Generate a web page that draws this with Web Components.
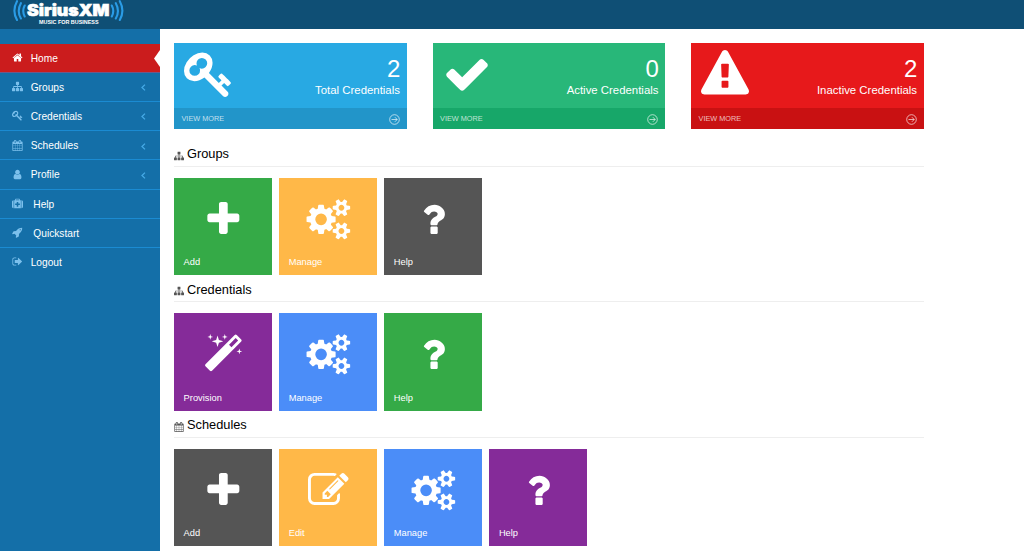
<!DOCTYPE html>
<html lang="en">
<head>
<meta charset="utf-8">
<title>SiriusXM Music for Business</title>
<style>
  html, body {
    margin: 0;
    height: 100%;
    overflow: hidden;
    background: #fff;
    font-family: "Liberation Sans", Arial, sans-serif;
  }
</style>
</head>
<body>
<sxm-dashboard>
  <sxm-header slot="header"></sxm-header>
  <sxm-nav slot="nav">
    <nav-item icon="home" active>Home</nav-item>
    <nav-item icon="sitemap" expandable>Groups</nav-item>
    <nav-item icon="key" expandable>Credentials</nav-item>
    <nav-item icon="calendar" expandable>Schedules</nav-item>
    <nav-item icon="user" expandable>Profile</nav-item>
    <nav-item icon="medkit" indent>Help</nav-item>
    <nav-item icon="rocket" indent>Quickstart</nav-item>
    <nav-item icon="signout">Logout</nav-item>
  </sxm-nav>
  <stat-row>
    <stat-card icon="key" size="50" count="2" color="#28a9e3" footer="#2295c9">Total Credentials</stat-card>
    <stat-card icon="check" size="48" count="0" color="#28b779" footer="#17a769">Active Credentials</stat-card>
    <stat-card icon="warning" size="48" count="2" color="#e7191b" footer="#c91112">Inactive Credentials</stat-card>
  </stat-row>
  <tile-section icon="sitemap" heading="Groups">
    <action-tile icon="plus" color="#35aa47">Add</action-tile>
    <action-tile icon="cogs" color="#ffb848">Manage</action-tile>
    <action-tile icon="question" color="#555555">Help</action-tile>
  </tile-section>
  <tile-section icon="sitemap" heading="Credentials">
    <action-tile icon="magic" color="#852b99">Provision</action-tile>
    <action-tile icon="cogs" color="#4b8df8">Manage</action-tile>
    <action-tile icon="question" color="#35aa47">Help</action-tile>
  </tile-section>
  <tile-section icon="calendar" heading="Schedules">
    <action-tile icon="plus" color="#555555">Add</action-tile>
    <action-tile icon="edit" color="#ffb848">Edit</action-tile>
    <action-tile icon="cogs" color="#4b8df8">Manage</action-tile>
    <action-tile icon="question" color="#852b99">Help</action-tile>
  </tile-section>
</sxm-dashboard>

<script>
(function initDashboard() {
  // every glyph sits on a 1792 unit em square
  const icons = {
    home: "M1472 992v480q0 26-19 45t-45 19h-384v-384h-256v384h-384q-26 0-45-19t-19-45v-480q0-1 .5-3t.5-3l575-474 575 474q1 2 1 6zm223-69l-62 74q-8 9-21 11h-3q-13 0-21-7l-692-577-692 577q-12 8-24 7-13-2-21-11l-62-74q-8-10-7-23.5t11-21.5l719-599q32-26 76-26t76 26l244 204v-195q0-14 9-23t23-9h192q14 0 23 9t9 23v408l219 182q10 8 11 21.5t-7 23.5z",
    sitemap: "M1792 1248v320q0 40-28 68t-68 28h-320q-40 0-68-28t-28-68v-320q0-40 28-68t68-28h96v-192h-512v192h96q40 0 68 28t28 68v320q0 40-28 68t-68 28h-320q-40 0-68-28t-28-68v-320q0-40 28-68t68-28h96v-192h-512v192h96q40 0 68 28t28 68v320q0 40-28 68t-68 28h-320q-40 0-68-28t-28-68v-320q0-40 28-68t68-28h96v-192q0-52 38-90t90-38h512v-192h-96q-40 0-68-28t-28-68v-320q0-40 28-68t68-28h320q40 0 68 28t28 68v320q0 40-28 68t-68 28h-96v192h512q52 0 90 38t38 90v192h96q40 0 68 28t28 68z",
    key: "M832 512q0-80-56-136t-136-56-136 56-56 136q0 42 19 83-41-19-83-19-80 0-136 56t-56 136 56 136 136 56 136-56 56-136q0-42-19-83 41 19 83 19 80 0 136-56t56-136zm851 704q0 17-49 66t-66 49q-9 0-28.5-16t-36.5-33-38.5-40-24.5-26l-96 96 220 220q28 28 28 68 0 42-39 81t-81 39q-40 0-68-28l-671-671q-176 131-365 131-163 0-265.5-102.5t-102.5-265.5q0-160 95-313t248-248 313-95q163 0 265.5 102.5t102.5 265.5q0 189-131 365l355 355 96-96q-3-3-26-24.5t-40-38.5-33-36.5-16-28.5q0-17 49-66t66-49q13 0 23 10 6 6 46 44.5t82 79.5 86.5 86 73 78 28.5 41z",
    calendar: "M192 1664h288v-288h-288v288zm352 0h320v-288h-320v288zm-352-352h288v-320h-288v320zm352 0h320v-320h-320v320zm-352-384h288v-288h-288v288zm736 736h320v-288h-320v288zm-384-736h320v-288h-320v288zm768 736h288v-288h-288v288zm-384-352h320v-320h-320v320zm-352-864v-288q0-13-9.5-22.5t-22.5-9.5h-64q-13 0-22.5 9.5t-9.5 22.5v288q0 13 9.5 22.5t22.5 9.5h64q13 0 22.5-9.5t9.5-22.5zm736 864h288v-320h-288v320zm-384-384h320v-288h-320v288zm384 0h288v-288h-288v288zm32-480v-288q0-13-9.5-22.5t-22.5-9.5h-64q-13 0-22.5 9.5t-9.5 22.5v288q0 13 9.5 22.5t22.5 9.5h64q13 0 22.5-9.5t9.5-22.5zm384-64v1280q0 52-38 90t-90 38h-1408q-52 0-90-38t-38-90v-1280q0-52 38-90t90-38h128v-96q0-66 47-113t113-47h64q66 0 113 47t47 113v96h384v-96q0-66 47-113t113-47h64q66 0 113 47t47 113v96h128q52 0 90 38t38 90z",
    user: "M1536 1399q0 109-62.5 187t-150.5 78h-854q-88 0-150.5-78t-62.5-187q0-85 8.5-160.5t31.5-152 58.5-131 94-89 134.5-34.5q131 128 313 128t313-128q76 0 134.5 34.5t94 89 58.5 131 31.5 152 8.5 160.5zm-256-887q0 159-112.5 271.5t-271.5 112.5-271.5-112.5-112.5-271.5 112.5-271.5 271.5-112.5 271.5 112.5 112.5 271.5z",
    medkit: "M1280 1120v-192q0-14-9-23t-23-9h-224v-224q0-14-9-23t-23-9h-192q-14 0-23 9t-9 23v224h-224q-14 0-23 9t-9 23v192q0 14 9 23t23 9h224v224q0 14 9 23t23 9h192q14 0 23-9t9-23v-224h224q14 0 23-9t9-23zm-640-736h512v-128h-512v128zm-384 0v1280h-32q-92 0-158-66t-66-158v-832q0-92 66-158t158-66h32zm1184 0v1280h-1088v-1280h160v-160q0-40 28-68t68-28h576q40 0 68 28t28 68v160h160zm352 224v832q0 92-66 158t-158 66h-32v-1280h32q92 0 158 66t66 158z",
    rocket: "M1440 448q0-40-28-68t-68-28-68 28-28 68 28 68 68 28 68-28 28-68zm224-288q0 249-75.5 430.5t-253.5 360.5q-81 80-195 176l-20 379q-2 16-16 26l-384 224q-7 4-16 4-12 0-23-9l-64-64q-13-14-8-32l85-276-281-281-276 85q-3 1-9 1-14 0-23-9l-64-64q-17-19-5-39l224-384q10-14 26-16l379-20q96-114 176-195 188-187 358-258t431-71q14 0 24 9.5t10 22.5z",
    signout: "M704 1440q0 4 1 20t.5 26.5-3 23.5-10 19.5-20.5 6.5h-320q-119 0-203.5-84.5t-84.5-203.5v-704q0-119 84.5-203.5t203.5-84.5h320q13 0 22.5 9.5t9.5 22.5q0 4 1 20t.5 26.5-3 23.5-10 19.5-20.5 6.5h-320q-66 0-113 47t-47 113v704q0 66 47 113t113 47h312l11.5 1 11.5 3 8 5.5 7 9 2 13.5zm928-544q0 26-19 45l-544 544q-19 19-45 19t-45-19-19-45v-288h-448q-26 0-45-19t-19-45v-384q0-26 19-45t45-19h448v-288q0-26 19-45t45-19 45 19l544 544q19 19 19 45z",
    check: "M1671 566q0 40-28 68l-724 724-136 136q-28 28-68 28t-68-28l-136-136-362-362q-28-28-28-68t28-68l136-136q28-28 68-28t68 28l294 295 656-657q28-28 68-28t68 28l136 136q28 28 28 68z",
    warning: "M1024 1375v-190q0-14-9.5-23.5t-22.5-9.5h-192q-13 0-22.5 9.5t-9.5 23.5v190q0 14 9.5 23.5t22.5 9.5h192q13 0 22.5-9.5t9.5-23.5zm-2-374l18-459q0-12-10-19-13-11-24-11h-220q-11 0-24 11-10 7-10 21l17 457q0 10 10 16.5t24 6.5h185q14 0 23.5-6.5t10.5-16.5zm-14-934l768 1408q35 63-2 126-17 29-46.5 46t-63.5 17h-1536q-34 0-63.5-17t-46.5-46q-37-63-2-126l768-1408q17-31 47-49t65-18 65 18 47 49z",
    plus: "M1600 736v192q0 40-28 68t-68 28h-416v416q0 40-28 68t-68 28h-192q-40 0-68-28t-28-68v-416h-416q-40 0-68-28t-28-68v-192q0-40 28-68t68-28h416v-416q0-40 28-68t68-28h192q40 0 68 28t28 68v416h416q40 0 68 28t28 68z",
    cogs: "M832 896q0-106-75-181t-181-75-181 75-75 181 75 181 181 75 181-75 75-181zm768 512q0-52-38-90t-90-38-90 38-38 90q0 53 37.5 90.5t90.5 37.5 90.5-37.5 37.5-90.5zm0-1024q0-52-38-90t-90-38-90 38-38 90q0 53 37.5 90.5t90.5 37.5 90.5-37.5 37.5-90.5zm-384 421v185q0 10-7 19.5t-16 10.5l-155 24q-11 35-32 76 34 48 90 115 7 11 7 20 0 12-7 19-23 30-82.5 89.5t-78.5 59.5q-11 0-21-7l-115-90q-37 19-77 31-11 108-23 155-7 24-30 24h-186q-11 0-20-7.5t-10-17.5l-23-153q-34-10-75-31l-118 89q-7 7-20 7-11 0-21-8-144-133-144-160 0-9 7-19 10-14 41-53t47-61q-23-44-35-82l-152-24q-10-1-17-9.5t-7-19.5v-185q0-10 7-19.5t16-10.5l155-24q11-35 32-76-34-48-90-115-7-11-7-20 0-12 7-20 22-30 82-89t79-59q11 0 21 7l115 90q34-18 77-32 11-108 23-154 7-24 30-24h186q11 0 20 7.5t10 17.5l23 153q34 10 75 31l118-89q8-7 20-7 11 0 21 8 144 133 144 160 0 8-7 19-12 16-42 54t-45 60q23 48 34 82l152 23q10 2 17 10.5t7 19.5zm640 533v140q0 16-149 31-12 27-30 52 51 113 51 138 0 4-4 7-122 71-124 71-8 0-46-47t-52-68q-20 2-30 2t-30-2q-14 21-52 68t-46 47q-2 0-124-71-4-3-4-7 0-25 51-138-18-25-30-52-149-15-149-31v-140q0-16 149-31 13-29 30-52-51-113-51-138 0-4 4-7 4-2 35-20t59-34 30-16q8 0 46 46.5t52 67.5q20-2 30-2t30 2q51-71 92-112l6-2q4 0 124 70 4 3 4 7 0 25-51 138 17 23 30 52 149 15 149 31zm0-1024v140q0 16-149 31-12 27-30 52 51 113 51 138 0 4-4 7-122 71-124 71-8 0-46-47t-52-68q-20 2-30 2t-30-2q-14 21-52 68t-46 47q-2 0-124-71-4-3-4-7 0-25 51-138-18-25-30-52-149-15-149-31v-140q0-16 149-31 13-29 30-52-51-113-51-138 0-4 4-7 4-2 35-20t59-34 30-16q8 0 46 46.5t52 67.5q20-2 30-2t30 2q51-71 92-112l6-2q4 0 124 70 4 3 4 7 0 25-51 138 17 23 30 52 149 15 149 31z",
    question: "M1088 1256v240q0 16-12 28t-28 12h-240q-16 0-28-12t-12-28v-240q0-16 12-28t28-12h240q16 0 28 12t12 28zm316-600q0 54-15.5 101t-35 76.5-55 59.5-57.5 43.5-61 35.5q-41 23-68.5 65t-27.5 67q0 17-12 32.5t-28 15.5h-240q-15 0-25.5-18.5t-10.5-37.5v-45q0-83 65-156.5t143-108.5q59-27 84-56t25-76q0-42-46.5-74t-107.5-32q-65 0-108 29-35 25-107 115-13 16-31 16-12 0-25-8l-164-125q-13-10-15.5-25t5.5-28q160-266 464-266 80 0 161 31t146 83 106 127.5 41 158.5z",
    magic: "M1254 581l293-293-107-107-293 293zm447-293q0 27-18 45l-1286 1286q-18 18-45 18t-45-18l-198-198q-18-18-18-45t18-45l1286-1286q18-18 45-18t45 18l198 198q18 18 18 45zm-1351-190l98 30-98 30-30 98-30-98-98-30 98-30 30-98zm350 162l196 60-196 60-60 196-60-196-196-60 196-60 60-196zm930 478l98 30-98 30-30 98-30-98-98-30 98-30 30-98zm-640-640l98 30-98 30-30 98-30-98-98-30 98-30 30-98z",
    edit: "M888 1184l116-116-152-152-116 116v56h96v96h56zm440-720q-16-16-33 1l-350 350q-17 17-1 33t33-1l350-350q17-17 1-33zm80 594v190q0 119-84.5 203.5t-203.5 84.5h-832q-119 0-203.5-84.5t-84.5-203.5v-832q0-119 84.5-203.5t203.5-84.5h832q63 0 117 25 15 7 18 23 3 17-9 29l-49 49q-14 14-32 8-23-6-45-6h-832q-66 0-113 47t-47 113v832q0 66 47 113t113 47h832q66 0 113-47t47-113v-126q0-13 9-22l64-64q15-15 35-7t20 29zm-96-738l288 288-672 672h-288v-288zm444 132l-92 92-288-288 92-92q28-28 68-28t68 28l152 152q28 28 28 68t-28 68z",
  };

  class FaIcon extends HTMLElement {
    constructor() {
      super();
      this.attachShadow({ mode: "open" });
    }
    connectedCallback() {
      const size = this.getAttribute("size") || 11;
      this.shadowRoot.innerHTML = `
        <style>
          :host { display: block; flex: none; width: ${size}px; height: ${size}px; }
          svg { display: block; width: 100%; height: 100%; overflow: visible; fill: currentColor; }
        </style>
        <svg viewBox="0 0 1792 1792"><path d="${icons[this.getAttribute("name")]}"/></svg>
      `;
    }
  }

  class SxmHeader extends HTMLElement {
    constructor() {
      super();
      this.attachShadow({ mode: "open" });
      this.shadowRoot.innerHTML = `
        <style>
          :host { display: block; height: 29px; background: #0f4f75; }
          svg { display: block; margin-left: 10px; }
          .waves { fill: none; stroke: #2a9ce6; stroke-width: 2.1; stroke-linecap: round; }
          .name { font: 900 16px Inter, sans-serif; fill: #fff; stroke: #fff; stroke-width: .6; }
          .tag { font: 700 5px "Liberation Sans", sans-serif; fill: #fff; }
        </style>
        <svg width="120" height="29" viewBox="10 0 120 29">
          <g class="waves">
            <path d="M24.7 5.5Q21.8 11 24.7 16.5M20.9 3.2Q16.6 11 20.9 18.5M17 1.2Q11.8 10.7 17 20"/>
            <path d="M111.8 5.5Q114.7 11 111.8 16.5M115.8 3.2Q120.1 11 115.8 18.5M119.8 1.2Q125 10.7 119.8 20"/>
          </g>
          <text class="name" x="27" y="16.2" textLength="82.5" lengthAdjust="spacingAndGlyphs">SiriusXM</text>
          <text class="tag" x="39" y="24.1" textLength="59.5" lengthAdjust="spacingAndGlyphs">MUSIC FOR BUSINESS</text>
        </svg>
      `;
    }
  }

  class SxmNav extends HTMLElement {
    constructor() {
      super();
      this.attachShadow({ mode: "open" });
      this.shadowRoot.innerHTML = `
        <style>
          :host {
            display: flex;
            flex-direction: column;
            box-sizing: border-box;
            height: 100%;
            padding-top: 14.6px;
            background: #146fa8;
          }
        </style>
        <slot></slot>
      `;
    }
  }

  class NavItem extends HTMLElement {
    constructor() {
      super();
      this.attachShadow({ mode: "open" });
      this.shadowRoot.innerHTML = `
        <style>
          :host {
            display: flex;
            align-items: center;
            box-sizing: border-box;
            position: relative;
            height: 29.2px;
            padding: .8px 14px 0 11.5px;
            border-bottom: 1px solid #1b8bd2;
            font-size: 10.2px;
            color: #fff;
          }
          :host(:last-child) { border-bottom: none; padding-bottom: 1px; }
          :host([active]) { background: #cb1c1d; border-bottom-color: #70598a; }
          fa-icon { margin: -1px 8.2px 0 0; color: #7cc0ec; }
          :host([active]) fa-icon { color: #fff; }
          :host([indent]) fa-icon { margin-right: 10.8px; }
          .label { flex: 1; }
          .angle { fill: none; stroke: #46a9e6; stroke-width: 1.3; margin-top: 1px; }
          .notch {
            position: absolute;
            right: 0;
            top: 6px;
            fill: #fff;
          }
        </style>
        <fa-icon name="${this.getAttribute("icon")}"></fa-icon>
        <span class="label"><slot></slot></span>
        ${this.hasAttribute("expandable") ? `<svg class="angle" width="5" height="7" viewBox="0 0 5 7"><path d="M4 .6L1 3.5l3 2.9"/></svg>` : ""}
        ${this.hasAttribute("active") ? `<svg class="notch" width="6" height="17" viewBox="0 0 6 17"><path d="M6 0L0 8.5 6 17z"/></svg>` : ""}
      `;
    }
  }

  class StatRow extends HTMLElement {
    constructor() {
      super();
      this.attachShadow({ mode: "open" });
      this.shadowRoot.innerHTML = `
        <style>
          :host { display: grid; grid-template-columns: repeat(3, 1fr); gap: 25.6px; height: 86px; }
        </style>
        <slot></slot>
      `;
    }
  }

  class StatCard extends HTMLElement {
    constructor() {
      super();
      this.attachShadow({ mode: "open" });
      this.shadowRoot.innerHTML = `
        <style>
          :host {
            display: flex;
            flex-direction: column;
            background: ${this.getAttribute("color")};
            color: #fff;
          }
          .body { display: flex; flex: 1; padding: 0 7px 0 10px; }
          .visual { display: flex; align-items: center; height: 62.6px; width: 50px; }
          .details { flex: 1; text-align: right; white-space: nowrap; }
          .number { margin: 12.5px -.4px 0 0; font-size: 24px; line-height: 26px; }
          .desc { font-size: 11.4px; line-height: 14px; margin-top: 1px; }
          .more {
            display: flex;
            align-items: center;
            justify-content: space-between;
            height: 21px;
            padding: 0 7px 0 7.5px;
            background: ${this.getAttribute("footer")};
            font-size: 7.3px;
            color: rgba(255, 255, 255, .72);
          }
          .more svg { fill: none; stroke: currentColor; stroke-width: .9; margin-top: 1.5px; }
        </style>
        <div class="body">
          <div class="visual"><fa-icon name="${this.getAttribute("icon")}" size="${this.getAttribute("size")}"></fa-icon></div>
          <div class="details">
            <div class="number">${this.getAttribute("count")}</div>
            <div class="desc"><slot></slot></div>
          </div>
        </div>
        <div class="more">
          <span>VIEW MORE</span>
          <svg width="11" height="11" viewBox="0 0 11 11"><circle cx="5.5" cy="5.5" r="4.8"/><path d="M2.5 5.5h5.6M5.9 3.2l2.3 2.3-2.3 2.3"/></svg>
        </div>
      `;
    }
  }

  class TileSection extends HTMLElement {
    constructor() {
      super();
      this.attachShadow({ mode: "open" });
      this.shadowRoot.innerHTML = `
        <style>
          :host { display: block; height: 135.5px; }
          h3 {
            display: flex;
            align-items: center;
            box-sizing: border-box;
            height: 20.5px;
            margin: 0 0 11.1px;
            padding-bottom: 3.6px;
            border-bottom: 1px solid #eee;
            font-size: 12.8px;
            font-weight: 400;
            line-height: 16px;
            color: #000;
          }
          fa-icon { margin: 3px 3px 0 0; color: #555; }
          .tiles { display: flex; gap: 7.1px; }
        </style>
        <h3><fa-icon name="${this.getAttribute("icon")}" size="10"></fa-icon>${this.getAttribute("heading")}</h3>
        <div class="tiles"><slot></slot></div>
      `;
    }
  }

  class ActionTile extends HTMLElement {
    constructor() {
      super();
      this.attachShadow({ mode: "open" });
      this.shadowRoot.innerHTML = `
        <style>
          :host {
            display: flex;
            flex-direction: column;
            align-items: center;
            box-sizing: border-box;
            width: 98px;
            height: 97.6px;
            padding: 21px 9.6px 7.1px;
            background: ${this.getAttribute("color")};
            color: #fff;
          }
          .name { margin-top: auto; align-self: flex-start; font-size: 9.3px; line-height: 12px; }
        </style>
        <fa-icon name="${this.getAttribute("icon")}" size="40.7"></fa-icon>
        <span class="name"><slot></slot></span>
      `;
    }
  }

  class SxmDashboard extends HTMLElement {
    constructor() {
      super();
      this.attachShadow({ mode: "open" });
      this.shadowRoot.innerHTML = `
        <style>
          :host {
            display: grid;
            grid-template: 29px 1fr / 160px 1fr;
            height: 100vh;
            overflow: hidden;
          }
          header { grid-column: 1 / -1; }
          main { width: 750px; padding: 14px 0 0 14px; }
          ::slotted(stat-row) { margin-bottom: 17.2px; }
        </style>
        <header><slot name="header"></slot></header>
        <aside><slot name="nav"></slot></aside>
        <main><slot></slot></main>
      `;
    }
  }

  customElements.define("fa-icon", FaIcon);
  customElements.define("sxm-header", SxmHeader);
  customElements.define("sxm-nav", SxmNav);
  customElements.define("nav-item", NavItem);
  customElements.define("stat-row", StatRow);
  customElements.define("stat-card", StatCard);
  customElements.define("tile-section", TileSection);
  customElements.define("action-tile", ActionTile);
  customElements.define("sxm-dashboard", SxmDashboard);
})();
</script>
</body>
</html>
